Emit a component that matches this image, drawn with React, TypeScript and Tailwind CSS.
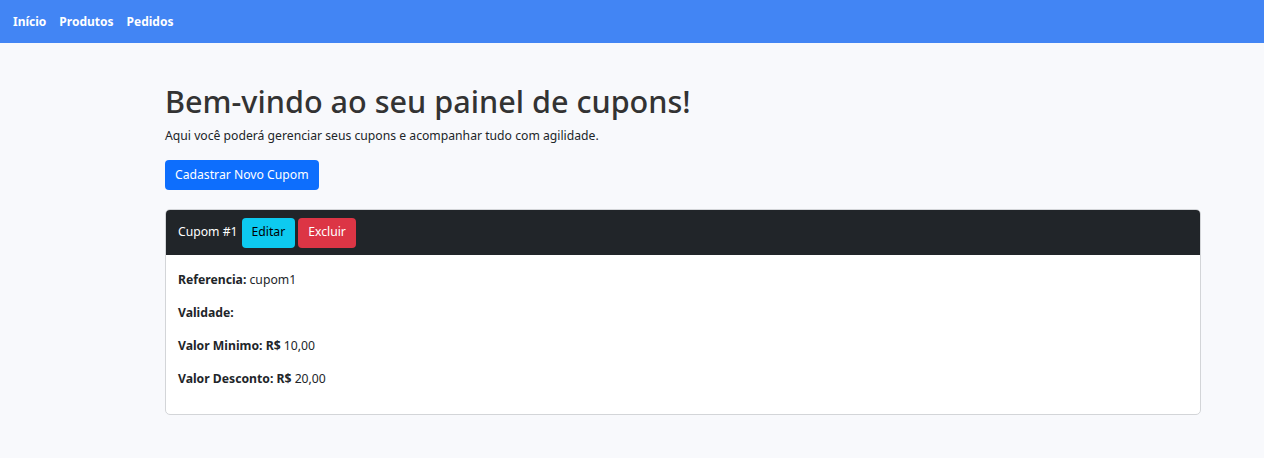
import React from 'react';

const cupom = {
  id: 1,
  referencia: 'cupom1',
  validade: '',
  valorMinimo: '10,00',
  valorDesconto: '20,00',
};

export default function App() {
  return (
    <div className="min-h-screen bg-[#f8f9fc] text-[#212529] font-['Noto_Sans',sans-serif]">
      <nav className="h-[43px] bg-[#4285f4] flex items-center gap-[13px] px-[13px]">
        <a className="text-white font-bold text-[12px]">Início</a>
        <a className="text-white font-bold text-[12px]">Produtos</a>
        <a className="text-white font-bold text-[12px]">Pedidos</a>
      </nav>

      <main className="w-[1036px] ml-[165px] pt-[40px]">
        <h1 className="text-[30.6px] leading-[37px] font-medium text-[#333] mb-[7px]">
          Bem-vindo ao seu painel de cupons!
        </h1>
        <p className="text-[12.2px] leading-[18px] mb-[15px]">
          Aqui você poderá gerenciar seus cupons e acompanhar tudo com agilidade.
        </p>
        <button className="h-[30px] px-[10px] bg-[#0d6efd] text-white text-[12.2px] rounded-[4px] mb-[19px]">
          Cadastrar Novo Cupom
        </button>

        <div className="bg-white border border-[#d3d5d8] rounded-[5px] overflow-hidden">
          <div className="h-[45px] bg-[#212529] flex items-center px-3 gap-[3px]">
            <span className="text-white text-[12.2px] mr-[1px]">Cupom #{cupom.id}</span>
            <button className="h-[30px] px-[10px] bg-[#0dcaf0] text-black text-[12.2px] rounded-[4px]">
              Editar
            </button>
            <button className="h-[30px] px-[10px] bg-[#dc3545] text-white text-[12.2px] rounded-[4px]">
              Excluir
            </button>
          </div>
          <div className="px-3 pt-[14px] pb-[13px] text-[12.2px] leading-[21px]">
            <p className="mb-[12px]"><b>Referencia:</b> {cupom.referencia}</p>
            <p className="mb-[12px]"><b>Validade:</b> {cupom.validade}</p>
            <p className="mb-[12px]"><b>Valor Minimo: R$</b> {cupom.valorMinimo}</p>
            <p className="mb-[12px]"><b>Valor Desconto: R$</b> {cupom.valorDesconto}</p>
          </div>
        </div>
      </main>
    </div>
  );
}
